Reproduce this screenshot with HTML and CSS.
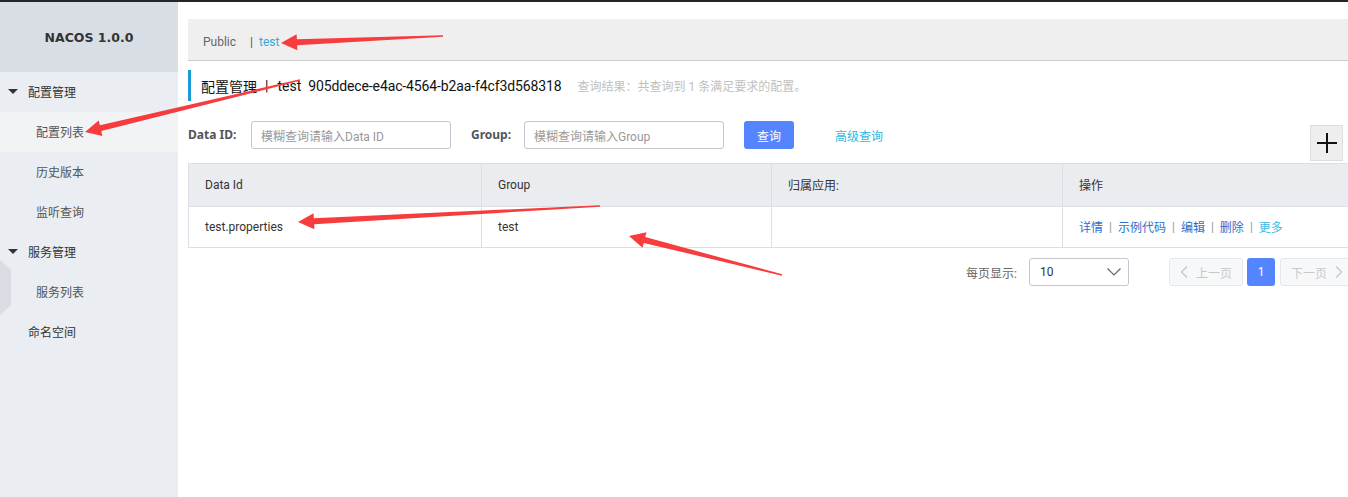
FILE: index.html
```html
<!DOCTYPE html>
<html lang="zh-CN">
<head>
<meta charset="utf-8">
<title>Nacos</title>
<link rel="stylesheet" href="styles.css">
</head>
<body>
<div class="topbar"></div>
<div class="layout">
  <aside class="sidebar">
    <div class="brand">NACOS 1.0.0</div>
    <ul class="menu">
      <li class="group"><span class="caret"></span>配置管理</li>
      <li class="item active">配置列表</li>
      <li class="item">历史版本</li>
      <li class="item">监听查询</li>
      <li class="group"><span class="caret"></span>服务管理</li>
      <li class="item">服务列表</li>
      <li class="group plain">命名空间</li>
    </ul>
    <div class="collapse-handle"></div>
  </aside>
  <main class="main">
    <div class="content">
      <div class="ns-bar">
        <span class="ns">Public</span>
        <span class="ns-sep">|</span>
        <span class="ns ns-active">test</span>
      </div>
      <div class="title-row">
        <span class="title">配置管理</span>
        <span class="title-sep">|</span>
        <span class="title">test</span>
        <span class="title title-id">905ddece-e4ac-4564-b2aa-f4cf3d568318</span>
        <span class="hint">查询结果：共查询到 1 条满足要求的配置。</span>
      </div>
      <div class="search">
        <span class="label label-id">Data ID:</span>
        <div class="input">模糊查询请输入Data ID</div>
        <span class="label label-group">Group:</span>
        <div class="input">模糊查询请输入Group</div>
        <button class="btn-primary" type="button">查询</button>
        <span class="adv-link">高级查询</span>
        <button class="btn-add" type="button" aria-label="add">
          <svg width="20" height="20" viewBox="0 0 20 20"><path d="M10 0V20M0 10H20" stroke="#111" stroke-width="2"/></svg>
        </button>
      </div>
      <div class="table">
        <div class="th">Data Id</div>
        <div class="th">Group</div>
        <div class="th">归属应用:</div>
        <div class="th">操作</div>
        <div class="td">test.properties</div>
        <div class="td">test</div>
        <div class="td"></div>
        <div class="td ops">
          <span class="op">详情</span><span class="op-sep">|</span><span class="op">示例代码</span><span class="op-sep">|</span><span class="op">编辑</span><span class="op-sep">|</span><span class="op">删除</span><span class="op-sep">|</span><span class="op op-more">更多</span>
        </div>
      </div>
      <div class="pager">
        <span class="pager-label">每页显示:</span>
        <div class="select">
          <span>10</span>
          <svg class="select-arrow" width="14" height="8" viewBox="0 0 14 8"><path d="M0.5 0.5L7 7L13.5 0.5" fill="none" stroke="#666" stroke-width="1.2"/></svg>
        </div>
        <div class="page-btn disabled prev">
          <svg width="8" height="12" viewBox="0 0 8 12"><path d="M7 0.5L1.5 6L7 11.5" fill="none" stroke="#c8c8c8" stroke-width="1.4"/></svg>
          <span>上一页</span>
        </div>
        <div class="page-num">1</div>
        <div class="page-btn disabled next">
          <span>下一页</span>
          <svg width="8" height="12" viewBox="0 0 8 12"><path d="M1 0.5L6.5 6L1 11.5" fill="none" stroke="#c8c8c8" stroke-width="1.4"/></svg>
        </div>
      </div>
    </div>
  </main>
</div>
<svg class="annotations" width="1348" height="497" viewBox="0 0 1348 497">
  <polygon points="443,35.3 296.9,39.3 296.6,34.3 281,43 297.3,50.3 297.1,45.3 443,36.7"/>
  <polygon points="299.9,79.3 99.9,125.3 98.7,120.5 85,132 102.4,136 101.3,131.1 300.1,80.7"/>
  <polygon points="600,205.3 313.8,218.2 313.6,213.2 298,222 314.4,229.2 314.2,224.2 600,206.7"/>
  <polygon points="782.2,274.3 645.2,237.1 646.5,232.2 629,236 642.5,247.7 643.8,242.9 781.8,275.7"/>
</svg>
</body>
</html>
```
FILE: styles.css
```css
* { box-sizing: border-box; margin: 0; padding: 0; }
html, body { width: 1348px; height: 497px; overflow: hidden; background: #fff; }
body {
  font-family: Roboto, "Noto Sans CJK SC", sans-serif;
  font-size: 12px;
  color: #333;
  position: relative;
}
.topbar { height: 2px; background: #262626; }
.layout { display: flex; height: 495px; }

/* sidebar */
.sidebar { width: 178px; flex: none; background: #eaedf1; position: relative; }
.brand {
  height: 70px; background: #d9dde4;
  display: flex; align-items: center; justify-content: center;
  font: bold 12.5px "DejaVu Sans", sans-serif; color: #333;
}
.menu { list-style: none; }
.menu li { height: 40px; display: flex; align-items: center; font-size: 12px; padding-bottom: 2px; }
.group { padding-left: 8px; color: #333; }
.group.plain { padding-left: 28px; }
.caret {
  width: 0; height: 0;
  border-left: 5px solid transparent; border-right: 5px solid transparent;
  border-top: 5px solid #333;
  margin-right: 10px;
}
.item { padding-left: 36px; color: #555; }
.item.active { background: #f2f3f5; }
.collapse-handle {
  position: absolute; left: 0; top: 258px;
  width: 11px; height: 55px; background: #d9dce2;
  clip-path: polygon(0 0, 100% 18%, 100% 82%, 0 100%);
}

/* main */
.main { flex: 1; padding: 0 10px; overflow: hidden; }
.content { width: 1166px; }
.ns-bar {
  margin-top: 17px; height: 42px; background: #efefef;
  border-bottom: 1px solid #ccc;
  display: flex; align-items: center; padding: 4px 0 0 15px; color: #666;
}
.ns-sep { margin-left: 14px; color: #555; }
.ns-active { margin-left: 6px; color: #2eaadc; }

.title-row {
  margin-top: 9px; height: 31px;
  border-left: 3px solid #1a9bd7; padding-left: 10px;
  display: flex; align-items: center;
}
.title { font-size: 14px; color: #111; }
.title-sep { font-size: 14px; color: #111; margin: 0 9px 0 8px; }
.title-id { margin-left: 7px; letter-spacing: -0.12px; }
.hint { margin-left: 16px; color: #c0c0c0; font-size: 12px; }

.search { margin-top: 20px; height: 28px; display: flex; align-items: center; }
.label { font-family: "Noto Sans", sans-serif; font-weight: bold; color: #555; font-size: 12px; padding-bottom: 1px; }
.label-id { width: 63px; }
.label-group { width: 53px; }
.input {
  width: 200px; height: 28px; border: 1px solid #c4c6cf; border-radius: 3px;
  padding-left: 9px; display: flex; align-items: center; color: #999;
}
.input:nth-of-type(1) { margin-right: 20px; }
.btn-primary {
  margin-left: 20px; width: 50px; height: 28px; border: none; border-radius: 3px;
  background: #5584ff; color: #fff; font: inherit; font-size: 12px;
}
.adv-link { margin-left: 41px; color: #2fb8e0; }
.btn-add {
  margin-left: auto; margin-right: 11px; align-self: flex-start; margin-top: 4px;
  width: 33px; height: 36px; background: #eee; border: 1px solid #ddd;
  display: flex; align-items: center; justify-content: center;
}
.btn-add svg { display: block; }

.table {
  margin-top: 14px;
  display: grid; grid-template-columns: 293px 290px 291px 292px;
  border-top: 1px solid #dcdee3; border-left: 1px solid #dcdee3;
}
.th, .td {
  border-right: 1px solid #dcdee3; border-bottom: 1px solid #dcdee3;
  padding-left: 16px; display: flex; align-items: center; color: #333;
}
.th { height: 43px; background: #ebecf0; padding-bottom: 1px; }
.td { height: 41px; padding-bottom: 1px; }
.op { color: #2a6fcf; }
.op-sep { color: #999; margin: 0 6px; }
.op-more { color: #3ab9e2; }

.pager {
  margin-top: 10px; height: 28px;
  display: flex; align-items: center; justify-content: flex-end;
}
.pager-label { color: #666; margin-right: 12px; }
.select {
  width: 100px; height: 28px; border: 1px solid #c4c6cf; border-radius: 3px;
  display: flex; align-items: center; justify-content: space-between;
  padding: 0 7px 0 10px; color: #333; margin-right: 40px;
}
.page-btn {
  width: 74px; height: 28px; border: 1px solid #e6e7eb; border-radius: 3px;
  background: #f7f8fa; color: #c8c8c8;
  display: flex; align-items: center; justify-content: center; gap: 8px;
}
.page-num {
  width: 28px; height: 28px; margin: 0 5px 0 4px; border-radius: 3px;
  background: #5584ff; color: #fff;
  display: flex; align-items: center; justify-content: center;
}

.annotations { position: absolute; left: 0; top: 0; pointer-events: none; }
.annotations polygon { fill: #f63c3c; }
```
